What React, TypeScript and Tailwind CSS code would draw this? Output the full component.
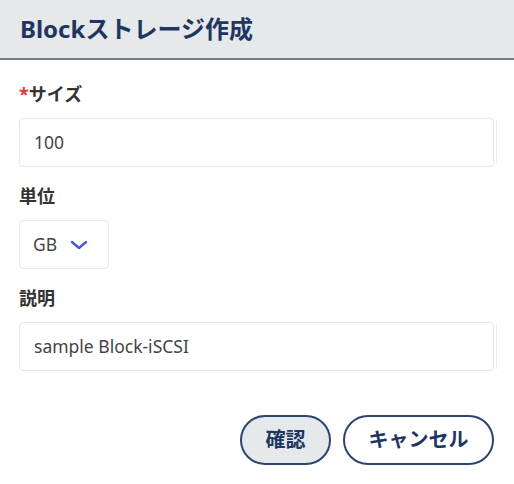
const font = { fontFamily: '"Noto Sans", "Noto Sans CJK JP", sans-serif' };

function Field({ value }: { value: string }) {
  return (
    <div className="flex items-center gap-[2px]">
      <div className="flex h-[49px] flex-1 items-center rounded-[4px] border border-[#e4e6ea] px-[14px] text-[17.5px] text-[#444]">
        {value}
      </div>
      <div className="h-[45px] w-px bg-[#ebedf3]" />
    </div>
  );
}

export default function App() {
  return (
    <div className="h-[484px] w-[514px] bg-white" style={font}>
      {/* Header */}
      <div className="flex h-[60px] items-center border-b-2 border-[#6f7f9c] bg-[#e5e9eb] px-[20px]">
        <h1 className="text-[24px] font-bold text-[#1f3661]">Blockストレージ作成</h1>
      </div>

      <div className="flex flex-col pl-[19px] pr-[17px] pt-[21px]">
        <label className="mb-[10px] text-[18px] font-bold text-[#333]">
          <span className="text-[#e53935]">*</span>サイズ
        </label>
        <Field value="100" />

        <label className="mb-[10px] mt-[16px] text-[18px] font-bold text-[#333]">単位</label>
        <div className="flex h-[49px] w-[90px] items-center gap-[13px] rounded-[4px] border border-[#e4e6ea] px-[13px] text-[17.5px] text-[#444]">
          GB
          <svg width="18" height="10" viewBox="0 0 18 10" fill="none">
            <polyline points="2,2 9,8 16,2" stroke="#4a57d6" strokeWidth="2.4" strokeLinecap="round" strokeLinejoin="round" />
          </svg>
        </div>

        <label className="mb-[10px] mt-[16px] text-[18px] font-bold text-[#333]">説明</label>
        <Field value="sample Block-iSCSI" />

        <div className="mt-[44px] flex justify-end gap-[12px] pr-[3px]">
          <button className="h-[50px] w-[91px] rounded-full border-2 border-[#2c4470] bg-[#e5e9eb] text-[20px] font-bold text-[#1f3661]">
            確認
          </button>
          <button className="h-[50px] w-[151px] rounded-full border-2 border-[#2c4470] bg-white text-[20px] font-bold text-[#1f3661]">
            キャンセル
          </button>
        </div>
      </div>
    </div>
  );
}
